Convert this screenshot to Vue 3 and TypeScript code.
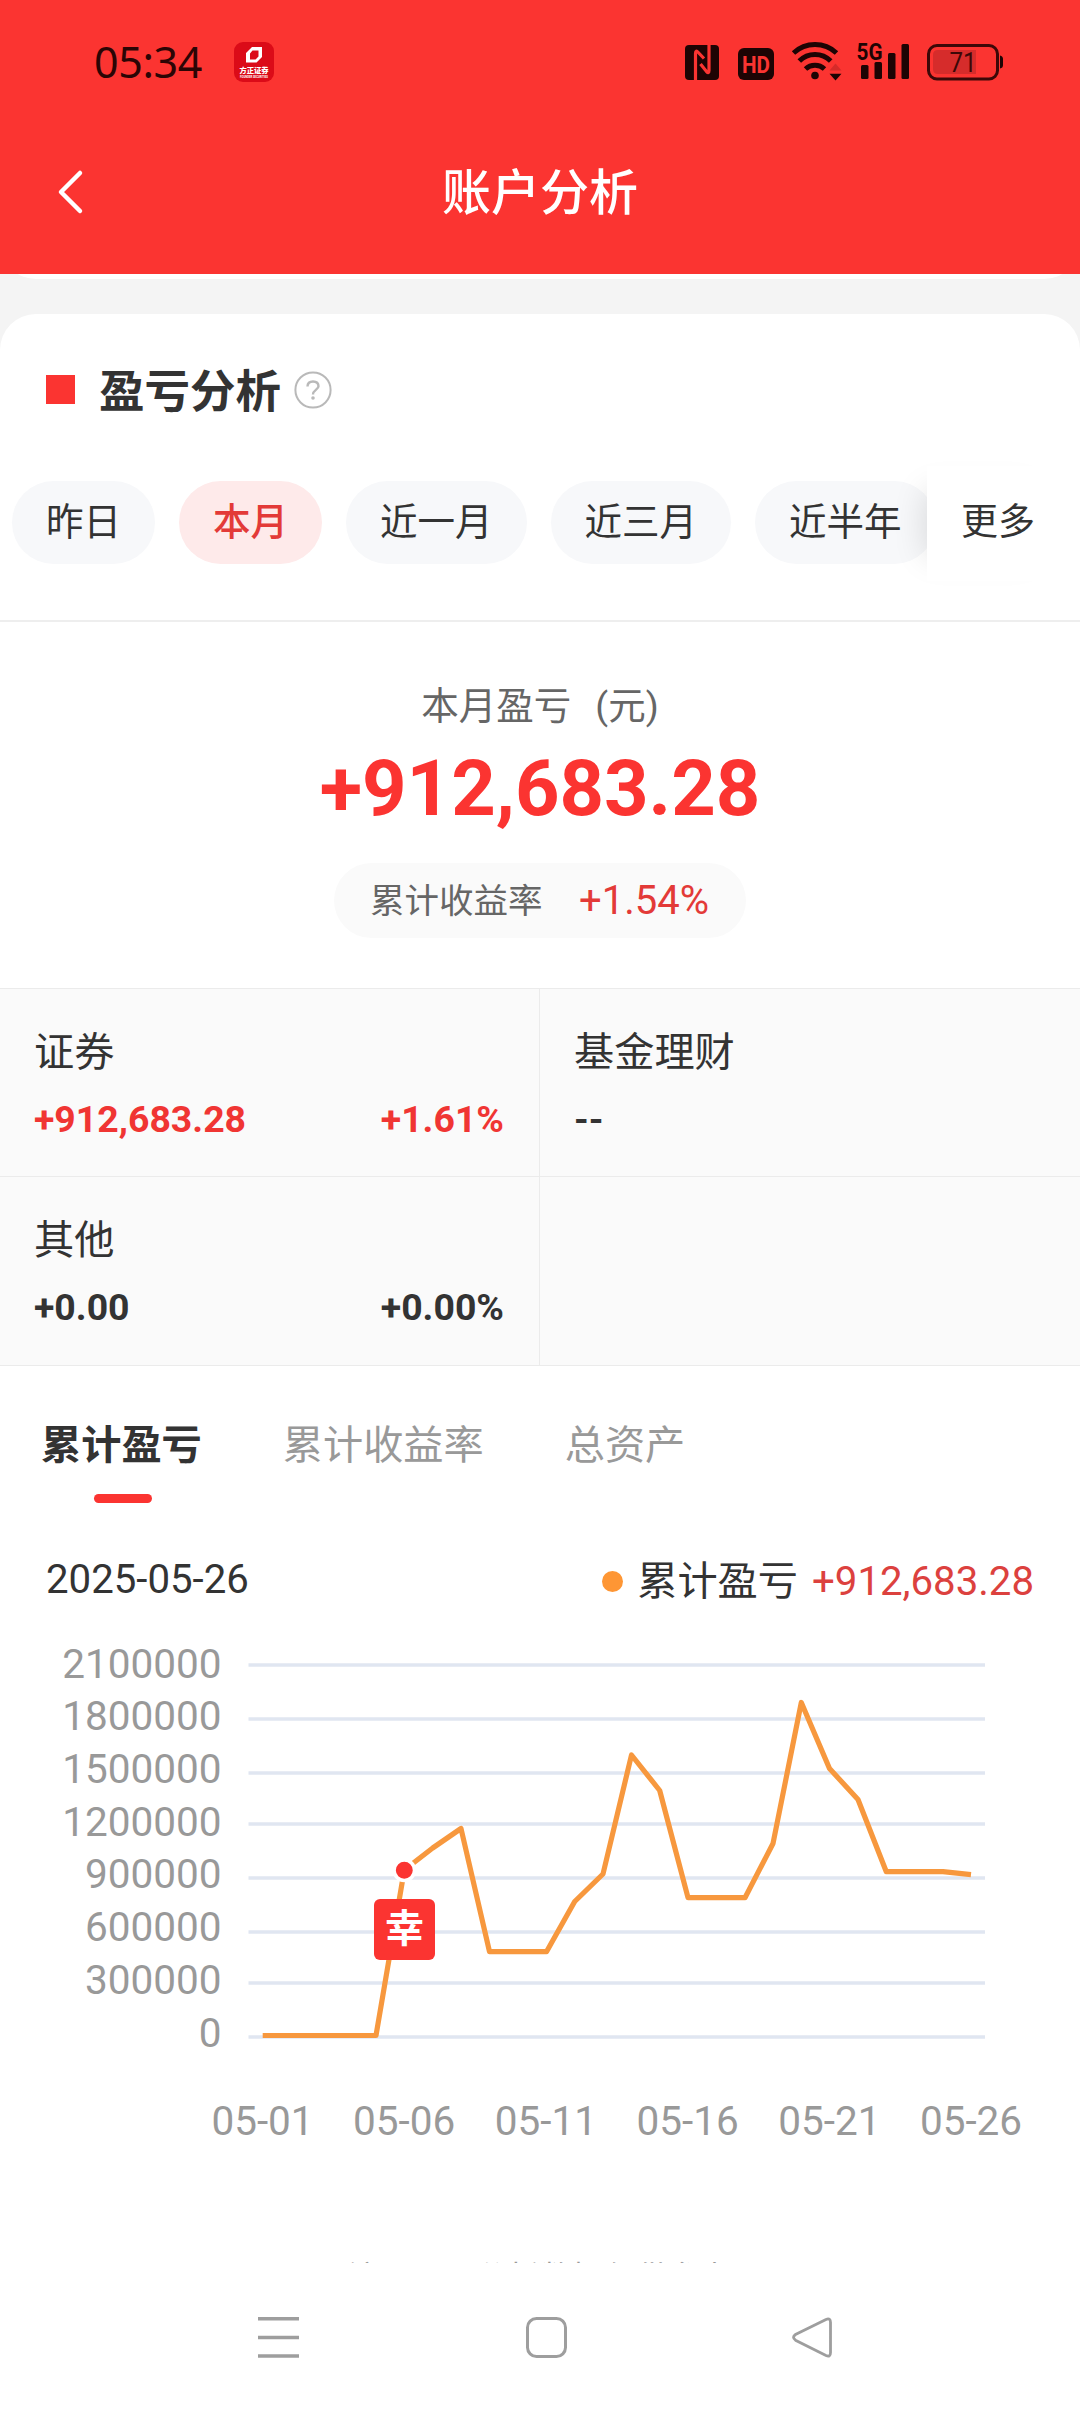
<script setup lang="ts">
interface Period {
  label: string
  active?: boolean
}

interface Holding {
  name: string
  amount: string
  rate: string
  up?: boolean
}

const periods: Period[] = [
  { label: '昨日' },
  { label: '本月', active: true },
  { label: '近一月' },
  { label: '近三月' },
  { label: '近半年' },
]

const holdings: Holding[] = [
  { name: '证券', amount: '+912,683.28', rate: '+1.61%', up: true },
  { name: '基金理财', amount: '--', rate: '' },
  { name: '其他', amount: '+0.00', rate: '+0.00%' },
  { name: '', amount: '', rate: '' },
]

const tabs: string[] = ['累计盈亏', '累计收益率', '总资产']

const yTicks = [
  { label: '2100000', text: 1663, line: 1665 },
  { label: '1800000', text: 1715, line: 1719 },
  { label: '1500000', text: 1768, line: 1773 },
  { label: '1200000', text: 1821, line: 1824 },
  { label: '900000', text: 1873, line: 1878 },
  { label: '600000', text: 1926, line: 1932 },
  { label: '300000', text: 1979, line: 1983 },
  { label: '0', text: 2032, line: 2037 },
]

const xTicks = ['05-01', '05-06', '05-11', '05-16', '05-21', '05-26'].map((label, i) => ({
  label,
  x: 262.5 + i * 141.7,
}))

const series: [number, number][] = [
  [262.7, 2035.5], [376, 2035.5], [404.3, 1870], [432.7, 1848], [461, 1828.5],
  [489.5, 1951.7], [546.5, 1951.7], [574.7, 1901.5], [603, 1874], [631.5, 1755],
  [659.7, 1790.5], [688, 1897.7], [745, 1897.7], [773, 1843.5], [801.3, 1702.5],
  [829.5, 1768.5], [858, 1799.5], [886.3, 1871.7], [943, 1871.7], [971, 1874.7],
]
const linePoints = series.map((p) => p.join(',')).join(' ')
</script>

<template>
  <div class="page">
    <header class="header">
      <div class="status">
        <span class="time">05:34</span>
        <svg class="app" width="40" height="40" viewBox="0 0 40 40">
          <rect width="40" height="40" rx="9" fill="#db0b18" />
          <path fill="#fff" fill-rule="evenodd" d="M18 5H28V15L22.5 20.500H12V11ZM18.500 8.500L16 11.500V17.500H21.500L24.500 14.500V8.500Z" />
          <text x="20" y="31.200" text-anchor="middle" font-size="7.300" font-weight="900" fill="#fff">方正证券</text>
          <text x="20" y="35.700" text-anchor="middle" font-size="2.700" font-weight="700" fill="#fff" textLength="28">FOUNDER SECURITIES</text>
        </svg>
        <svg class="sysicons" width="330" height="60" viewBox="680 32 330 60">
          <rect x="685" y="45" width="34" height="35" rx="4" fill="#1d0404" />
          <path d="M695.500 80V53.500Q695.500 49.500 698.300 52.500L704 58.500M700.500 64L706.500 71.500Q709 74 709 70.500V45" fill="none" stroke="#fb3431" stroke-width="3.200" />
          <rect x="738" y="48" width="36" height="32" rx="6" fill="#1d0404" />
          <text x="756" y="72.500" text-anchor="middle" font-size="24" font-weight="700" textLength="28" lengthAdjust="spacingAndGlyphs" fill="#fb3431">HD</text>
          <g fill="none" stroke="#1d0404" stroke-width="5">
            <path d="M793.500 53A31.500 31.500 0 0 1 836.500 53" />
            <path d="M799.300 61A22 22 0 0 1 830.700 61" />
            <path d="M805.500 69A14 14 0 0 1 824.500 69" />
          </g>
          <circle cx="815" cy="75.500" r="3.800" fill="#1d0404" />
          <path d="M829.500 70.500L835.500 63.500L841.500 70.500Z" fill="#d62b29" />
          <path d="M829.500 73.800L835.500 80.500L841.500 73.800Z" fill="#1d0404" />
          <text x="856.500" y="59.500" font-size="23.500" font-weight="700" textLength="26" lengthAdjust="spacingAndGlyphs" fill="#1d0404">5G</text>
          <g fill="#1d0404">
            <rect x="861" y="65" width="7.500" height="14" rx="1.500" />
            <rect x="874.500" y="62" width="7.500" height="17" rx="1.500" />
            <rect x="888" y="53" width="7.500" height="26" rx="1.500" />
            <rect x="901.500" y="44" width="7.500" height="35" rx="1.500" />
          </g>
          <rect x="928.500" y="45.500" width="69" height="33.500" rx="8.500" fill="none" stroke="#3c0808" stroke-width="3" />
          <path d="M976 50H938Q933 50 933 55V69Q933 74 938 74H976Z" fill="#d62c2b" />
          <path d="M1000 55.500Q1003 56 1003 59V65Q1003 68 1000 68.500Z" fill="#1d0404" />
          <text x="963" y="72" text-anchor="middle" font-size="27.500" fill="#3c0808" textLength="27" lengthAdjust="spacingAndGlyphs">71</text>
        </svg>
      </div>
      <div class="nav">
        <svg class="back" width="30" height="48" viewBox="0 0 30 48">
          <path d="M25 5L6 24L25 43" fill="none" stroke="#fff" stroke-width="4.500" stroke-linecap="round" stroke-linejoin="round" />
        </svg>
        <h1>账户分析</h1>
      </div>
    </header>

    <div class="strip"><div class="strip-card"></div></div>

    <main class="card">
      <div class="heading">
        <i class="block"></i>
        <h2>盈亏分析</h2>
        <svg width="40" height="40" viewBox="0 0 40 40">
          <circle cx="20" cy="20" r="17.600" fill="none" stroke="#b9b9b9" stroke-width="2" />
          <path d="M14.500 16.500Q14.500 11.500 20 11.500T25.500 16.300C25.500 19.500 20 20 20 24.500" fill="none" stroke="#b9b9b9" stroke-width="2.400" />
          <circle cx="20" cy="28" r="1.800" fill="#b9b9b9" />
        </svg>
      </div>

      <div class="periods">
        <span v-for="p in periods" :key="p.label" class="pill" :class="{ active: p.active }">{{ p.label }}</span>
        <div class="more">更多</div>
      </div>

      <section class="summary">
        <div class="caption"><span>本月盈亏</span><span>(元)</span></div>
        <div class="total">+912,683.28</div>
        <div class="rate"><span>累计收益率</span><b>+1.54%</b></div>
      </section>

      <section class="grid">
        <div v-for="(h, i) in holdings" :key="i" class="cell">
          <div class="name">{{ h.name }}</div>
          <div class="values" :class="{ up: h.up }">
            <span>{{ h.amount }}</span><span>{{ h.rate }}</span>
          </div>
        </div>
      </section>

      <div class="tabs">
        <div v-for="(t, i) in tabs" :key="t" class="tab" :class="{ on: i === 0 }">{{ t }}</div>
      </div>

      <div class="legend">
        <span class="date">2025-05-26</span>
        <span class="dot"></span>
        <span class="series">累计盈亏</span>
        <span class="amount">+912,683.28</span>
      </div>

      <svg class="chart" width="1080" height="560" viewBox="0 1620 1080 560">
        <g v-for="t in yTicks" :key="t.label">
          <line x1="248.500" x2="985" :y1="t.line" :y2="t.line" stroke="#e0e6f1" stroke-width="3.400" />
          <text x="221.500" :y="t.text + 14.500" text-anchor="end" class="axis">{{ t.label }}</text>
        </g>
        <text v-for="t in xTicks" :key="t.label" :x="t.x" y="2135" text-anchor="middle" class="axis">{{ t.label }}</text>
        <polyline :points="linePoints" fill="none" stroke="#f7983e" stroke-width="5.200" stroke-linejoin="round" />
        <circle cx="404.300" cy="1870.300" r="10.200" fill="#fb3431" stroke="#fff" stroke-width="3.500" />
        <rect x="374" y="1899" width="61" height="61" rx="6" fill="#fb3431" />
        <text x="404.500" y="1942" text-anchor="middle" font-size="39" font-weight="700" fill="#fff">幸</text>
      </svg>

      <div class="note"><p>注：盈亏分析数据仅供参考</p></div>
    </main>

    <footer class="sysnav">
      <svg width="1080" height="60" viewBox="0 2308 1080 60" fill="none" stroke="#9e9e9e">
        <path d="M258 2318.700H299M258 2337.500H299M258 2356H299" stroke-width="3.500" />
        <rect x="527.500" y="2318.500" width="38" height="38" rx="9" stroke-width="3" />
        <path d="M826 2319.500L795.500 2334.500Q791.500 2337.300 795.500 2340.200L826 2355.500Q830.500 2357.500 830.500 2352.500V2322.500Q830.500 2317.500 826 2319.500Z" stroke-width="2.800" />
      </svg>
    </footer>
  </div>
</template>

<style>
body {
  margin: 0;
}
</style>

<style scoped>
.page {
  width: 1080px;
  height: 2412px;
  overflow: hidden;
  display: flex;
  flex-direction: column;
  background: #f4f4f4;
  color: #333;
  font-family: Roboto, "Noto Sans CJK SC", sans-serif;
}
.header {
  height: 274px;
  flex: none;
  background: #fb3431;
}
.status {
  display: flex;
  align-items: center;
  height: 124px;
  padding: 0 70px 0 94px;
}
.time {
  width: 140px;
  font-family: "Noto Sans", sans-serif;
  font-size: 43px;
  line-height: 60px;
  letter-spacing: -0.4px;
  color: #2b0505;
}
.sysicons {
  margin-left: auto;
}
.nav {
  position: relative;
  display: flex;
  align-items: center;
  justify-content: center;
  height: 137px;
}
.back {
  position: absolute;
  left: 55px;
  top: 44px;
}
h1 {
  margin: 0;
  font-size: 49px;
  line-height: 60px;
  font-weight: 500;
  color: #fff;
  padding-top: 3px;
}
.strip {
  display: flex;
  align-items: flex-end;
  height: 5px;
  overflow: hidden;
  flex: none;
  margin-bottom: 35px;
}
.strip-card {
  width: 100%;
  height: 72px;
  flex: none;
  border-radius: 36px;
  background: #fff;
}
.card {
  height: 1949px;
  flex: none;
  display: flex;
  flex-direction: column;
  background: #fff;
  border-radius: 36px 36px 0 0;
}
.heading {
  display: flex;
  align-items: center;
  height: 152px;
  padding-left: 46px;
}
.block {
  width: 29px;
  height: 29px;
  margin-bottom: 1px;
  background: #fb3431;
}
h2 {
  margin: 6px 12px 0 24px;
  font-size: 45.500px;
  line-height: 60px;
  font-weight: 700;
}
.periods {
  position: relative;
  display: flex;
  align-items: center;
  gap: 24px;
  height: 115px;
  padding-left: 12px;
  margin-bottom: 39px;
}
.pill {
  box-sizing: border-box;
  flex: none;
  height: 83px;
  padding: 0 34px;
  margin-bottom: 2px;
  border-radius: 42px;
  background: #f7f8fa;
  font-size: 37.500px;
  line-height: 82px;
}
.pill.active {
  background: #feeaea;
  color: #e33a38;
  font-weight: 500;
}
.more {
  box-sizing: border-box;
  position: absolute;
  left: 927px;
  top: 0;
  width: 153px;
  height: 115px;
  padding: 0 0 0 34px;
  background: #fff;
  font-size: 37px;
  line-height: 114px;
  box-shadow: -26px 0 32px -24px rgba(0, 0, 0, 0.13);
}
.summary {
  display: flex;
  flex-direction: column;
  align-items: center;
  height: 366px;
  border-top: 2px solid #eee;
}
.caption {
  display: flex;
  gap: 24px;
  margin-top: 57px;
  font-size: 37.500px;
  line-height: 54px;
  color: #666;
}
.total {
  margin-top: 11px;
  font-size: 77.700px;
  line-height: 90px;
  font-weight: 700;
  color: #fb3431;
}
.rate {
  box-sizing: border-box;
  display: flex;
  align-items: center;
  justify-content: space-between;
  width: 412px;
  height: 75px;
  margin-top: 29px;
  padding: 0 37px 0 36px;
  border-radius: 38px;
  background: #fafafa;
  color: #666;
  font-size: 34.500px;
}
.rate span {
  margin-top: -6px;
}
.rate b {
  font-weight: 400;
  font-size: 40px;
  color: #e33a38;
}
.grid {
  display: grid;
  grid-template-columns: 540px 540px;
  grid-template-rows: 188px 189px;
  border-top: 1px solid #ebebeb;
  background: #fafafa;
}
.cell {
  box-sizing: border-box;
  padding: 34px 35px 0 34px;
  border-bottom: 1px solid #ebebeb;
}
.cell:nth-child(odd) {
  border-right: 1px solid #ebebeb;
}
.name {
  height: 60px;
  font-size: 40.200px;
  line-height: 60px;
}
.values {
  display: flex;
  justify-content: space-between;
  margin-top: 6px;
  font-size: 37.400px;
  line-height: 60px;
  font-weight: 700;
}
.up {
  color: #f03533;
}
.tabs {
  display: flex;
  gap: 81px;
  padding: 48px 0 0 41px;
  height: 91px;
  font-size: 40.200px;
  line-height: 64px;
  color: #999;
}
.tab.on {
  color: #333;
  font-weight: 700;
}
.tab.on::after {
  content: "";
  display: block;
  width: 58px;
  height: 9px;
  margin: 16px 0 0 53px;
  border-radius: 5px;
  background: #fb3431;
}
.legend {
  display: flex;
  align-items: center;
  height: 60px;
  margin-top: 46px;
  padding: 0 46px;
  font-size: 40.200px;
  line-height: 60px;
}
.date {
  margin: -3px auto 0 0;
}
.dot {
  width: 21px;
  height: 21px;
  margin-right: 14px;
  border-radius: 50%;
  background: #fe9634;
}
.series {
  margin: 2px 14px 0 0;
}
.amount {
  margin-top: 1px;
  color: #dc413e;
}
.chart {
  flex: none;
  margin-top: 9px;
}
.axis {
  font-size: 40.500px;
  fill: #999;
}
.note {
  height: 5px;
  margin-top: auto;
  overflow: hidden;
  text-align: center;
  color: #999;
  font-size: 32px;
  line-height: 40px;
}
.note p {
  margin: 0;
}
.sysnav {
  flex: 1;
  background: #fff;
  padding-top: 45px;
}
.sysnav svg {
  display: block;
}
</style>
